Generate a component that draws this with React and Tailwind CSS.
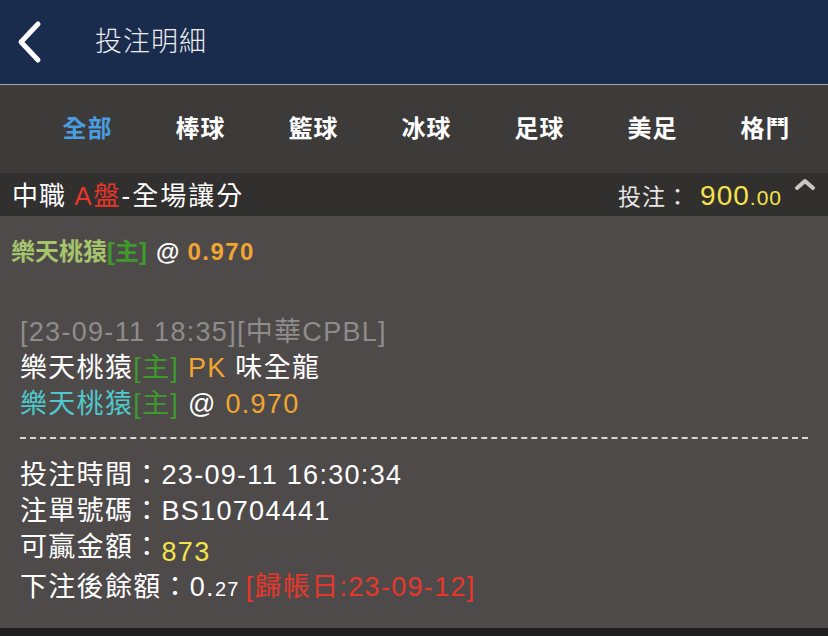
import React from "react";

const font = { fontFamily: '"Liberation Sans", "Noto Sans CJK TC", sans-serif' };

export default function App() {
  const tabs = ["全部", "棒球", "籃球", "冰球", "足球", "美足", "格鬥"];
  return (
    <div className="w-[828px] h-[636px] flex flex-col bg-[#1f1f1f] overflow-hidden" style={font}>
      <div className="h-[84px] bg-[#1a2c4e] flex items-center shrink-0">
        <div className="w-[95px] flex items-center pl-[14px]">
          <svg width="30" height="44" viewBox="0 0 30 44">
            <path d="M24 4 L7 22 L24 40" stroke="#fff" strokeWidth="5" fill="none" strokeLinecap="round" strokeLinejoin="round" />
          </svg>
        </div>
        <div className="text-[27px] text-[#eeeeee] font-light tracking-[1px]">投注明細</div>
      </div>
      <div className="h-px bg-[#a8a8a8] shrink-0" />
      <div className="h-[88px] bg-[#3d3a3a] flex items-center pl-[31px] shrink-0">
        {tabs.map((t, i) => (
          <div key={t} className={`w-[113px] text-center text-[24px] font-bold tracking-[1px] ${i === 0 ? "text-[#4a9de0]" : "text-white"}`}>
            {t}
          </div>
        ))}
      </div>
      <div className="h-[43px] bg-[#322f2f] flex items-center justify-between pl-[12px] pr-[12px] shrink-0 relative">
        <div className="text-[26px] text-white tracking-[1px] mt-[4px]">
          中職 <span className="text-[#e8362a] tracking-[2px]">A盤</span><span className="tracking-[2px]">-全場讓分</span>
        </div>
        <div className="flex items-baseline mr-[34px] mt-[3px] tracking-[1px]">
          <span className="text-[23px] text-[#e6e6e6]">投注：</span>
          <span className="text-[28px] text-[#f5e34c] ml-[10px]">900</span>
          <span className="text-[21px] text-[#f5e34c]">.00</span>
        </div>
        <svg className="absolute right-[12px] top-[4px]" width="22" height="14" viewBox="0 0 22 14">
          <path d="M3 11 L11 4 L19 11" stroke="#c8c8c8" strokeWidth="4" fill="none" strokeLinecap="round" strokeLinejoin="round" />
        </svg>
      </div>
      <div className="flex-1 bg-[#4e4a4a] flex flex-col">
        <div className="h-[70px] flex items-center pl-[11px] pt-[2px] text-[24px] font-bold">
          <span className="text-[#a6c46c]">樂天桃猿</span>
          <span className="text-[#3f9a2c]">[主]</span>
          <span className="text-white ml-[9px]">@</span>
          <span className="text-[#f2a531] ml-[8px] tracking-[1.5px]">0.970</span>
        </div>
        <div className="pl-[20px] pr-[20px] pt-[28px] text-[27px] leading-[36px] tracking-[1.3px]">
          <div className="text-[#8f8c8c]">[23-09-11 18:35][中華CPBL]</div>
          <div>
            <span className="text-white">樂天桃猿</span>
            <span className="text-[#3f9a2c]">[主]</span>
            <span className="text-[#f2a531]"> PK </span>
            <span className="text-white">味全龍</span>
          </div>
          <div>
            <span className="text-[#4fc8cc]">樂天桃猿</span>
            <span className="text-[#3f9a2c]">[主]</span>
            <span className="text-white"> @ </span>
            <span className="text-[#f2a531]">0.970</span>
          </div>
          <div className="border-t-2 border-dashed border-[#d8d8d8] mt-[15px] mb-[18px]" />
          <div className="text-white">投注時間：23-09-11 16:30:34</div>
          <div className="text-white">注單號碼：BS10704441</div>
          <div className="text-white h-[40px] flex items-start">
            <span>可贏金額：</span>
            <span className="text-[#f5e34c] mt-[5px]">873</span>
          </div>
          <div className="text-white">
            下注後餘額：0.<span className="text-[20px]">27</span>
            <span className="text-[#e8362a] ml-[6px]">[歸帳日:23-09-12]</span>
          </div>
        </div>
      </div>
      <div className="h-[8px] bg-[#1f1f1f] shrink-0" />
    </div>
  );
}
